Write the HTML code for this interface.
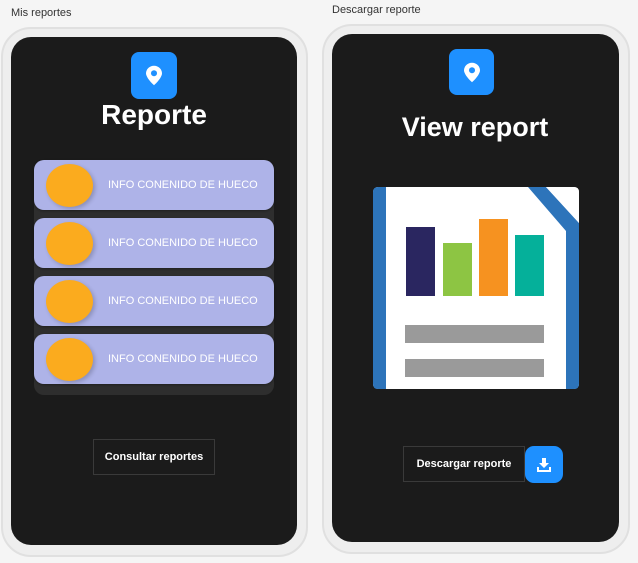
<!DOCTYPE html>
<html><head><style>
*{margin:0;padding:0;box-sizing:border-box}
body{width:638px;height:563px;background:#f5f5f5;font-family:"Liberation Sans",sans-serif;position:relative;overflow:hidden}
.a{position:absolute}
.lbl{font-size:11px;color:#333}
.phone{background:#eeeeee;border:2px solid #e0e0e0;border-radius:30px}
.scr{background:#1b1b1b;border-radius:20px}
.icon{background:#1e90ff;border-radius:8px;display:flex;align-items:center;justify-content:center}
.title{color:#fff;font-weight:bold;text-align:center}
.item{left:34px;width:240px;height:50px;background:#aeb3e8;border-radius:10px;box-shadow:0 1px 2px rgba(0,0,0,.3)}
.item .c{position:absolute;left:12px;top:4px;width:47px;height:43px;border-radius:50%;background:#fbab1e;box-shadow:2px 2px 4px rgba(0,0,0,.2)}
.item span{position:absolute;left:74px;top:19px;font-size:11px;color:#fff}
.btn{border:1px solid #3a3a3a;color:#fff;font-weight:bold;font-size:11px;display:flex;align-items:center;justify-content:center}
</style></head><body>
<div class="a lbl" style="left:11px;top:7px">Mis reportes</div>
<div class="a lbl" style="left:332px;top:4px">Descargar reporte</div>
<div class="a phone" style="left:1px;top:27px;width:307px;height:530px"></div>
<div class="a scr" style="left:11px;top:37px;width:286px;height:508px"></div>
<div class="a phone" style="left:322px;top:24px;width:308px;height:530px"></div>
<div class="a scr" style="left:332px;top:34px;width:287px;height:508px"></div>

<div class="a icon" style="left:131px;top:52px;width:46px;height:47px">
<svg width="16" height="21" viewBox="0 0 18 22"><path d="M9 0C4 0 0 4 0 8.5 0 14 9 22 9 22S18 14 18 8.5C18 4 14 0 9 0z" fill="#fff"/><circle cx="9" cy="8.5" r="3.4" fill="#1e90ff"/></svg></div>
<div class="a title" style="left:54px;width:200px;top:99px;font-size:28px">Reporte</div>

<div class="a" style="left:34px;top:160px;width:240px;height:235px;background:#2e2e2e;border-radius:10px"></div>
<div class="a item" style="top:160px"><div class="c"></div><span>INFO CONENIDO DE HUECO</span></div>
<div class="a item" style="top:218px"><div class="c"></div><span>INFO CONENIDO DE HUECO</span></div>
<div class="a item" style="top:276px"><div class="c"></div><span>INFO CONENIDO DE HUECO</span></div>
<div class="a item" style="top:334px"><div class="c"></div><span>INFO CONENIDO DE HUECO</span></div>

<div class="a btn" style="left:93px;top:439px;width:122px;height:36px">Consultar reportes</div>

<div class="a icon" style="left:449px;top:49px;width:45px;height:46px">
<svg width="16" height="21" viewBox="0 0 18 22"><path d="M9 0C4 0 0 4 0 8.5 0 14 9 22 9 22S18 14 18 8.5C18 4 14 0 9 0z" fill="#fff"/><circle cx="9" cy="8.5" r="3.4" fill="#1e90ff"/></svg></div>
<div class="a title" style="left:375px;width:200px;top:112px;font-size:27px">View report</div>

<svg class="a" style="left:373px;top:187px" width="206" height="202" viewBox="0 0 206 202">
<rect width="206" height="202" rx="5" fill="#fff"/>
<path d="M0 5Q0 0 5 0H13V202H5Q0 202 0 197Z" fill="#2d74ba"/>
<path d="M155 0H173L206 36V197Q206 202 201 202H193V44Z" fill="#2d74ba"/>
<path d="M173 0H201Q206 0 206 5V36Z" fill="#fff"/>
<rect x="33" y="40" width="29" height="69" fill="#2a2660"/>
<rect x="70" y="56" width="29" height="53" fill="#8dc543"/>
<rect x="106" y="32" width="29" height="77" fill="#f69220"/>
<rect x="142" y="48" width="29" height="61" fill="#05b09a"/>
<rect x="32" y="138" width="139" height="18" fill="#9a9a9a"/>
<rect x="32" y="172" width="139" height="18" fill="#9a9a9a"/>
</svg>

<div class="a btn" style="left:403px;top:446px;width:122px;height:36px">Descargar reporte</div>
<div class="a icon" style="left:525px;top:446px;width:38px;height:37px;border-radius:9px">
<svg width="16" height="16" viewBox="0 0 16 16"><path d="M6 1H10V6H13L8 11 3 6H6Z" fill="#fff"/><path d="M1 10V15H15V10H13V13H3V10Z" fill="#fff"/></svg></div>
</body></html>
